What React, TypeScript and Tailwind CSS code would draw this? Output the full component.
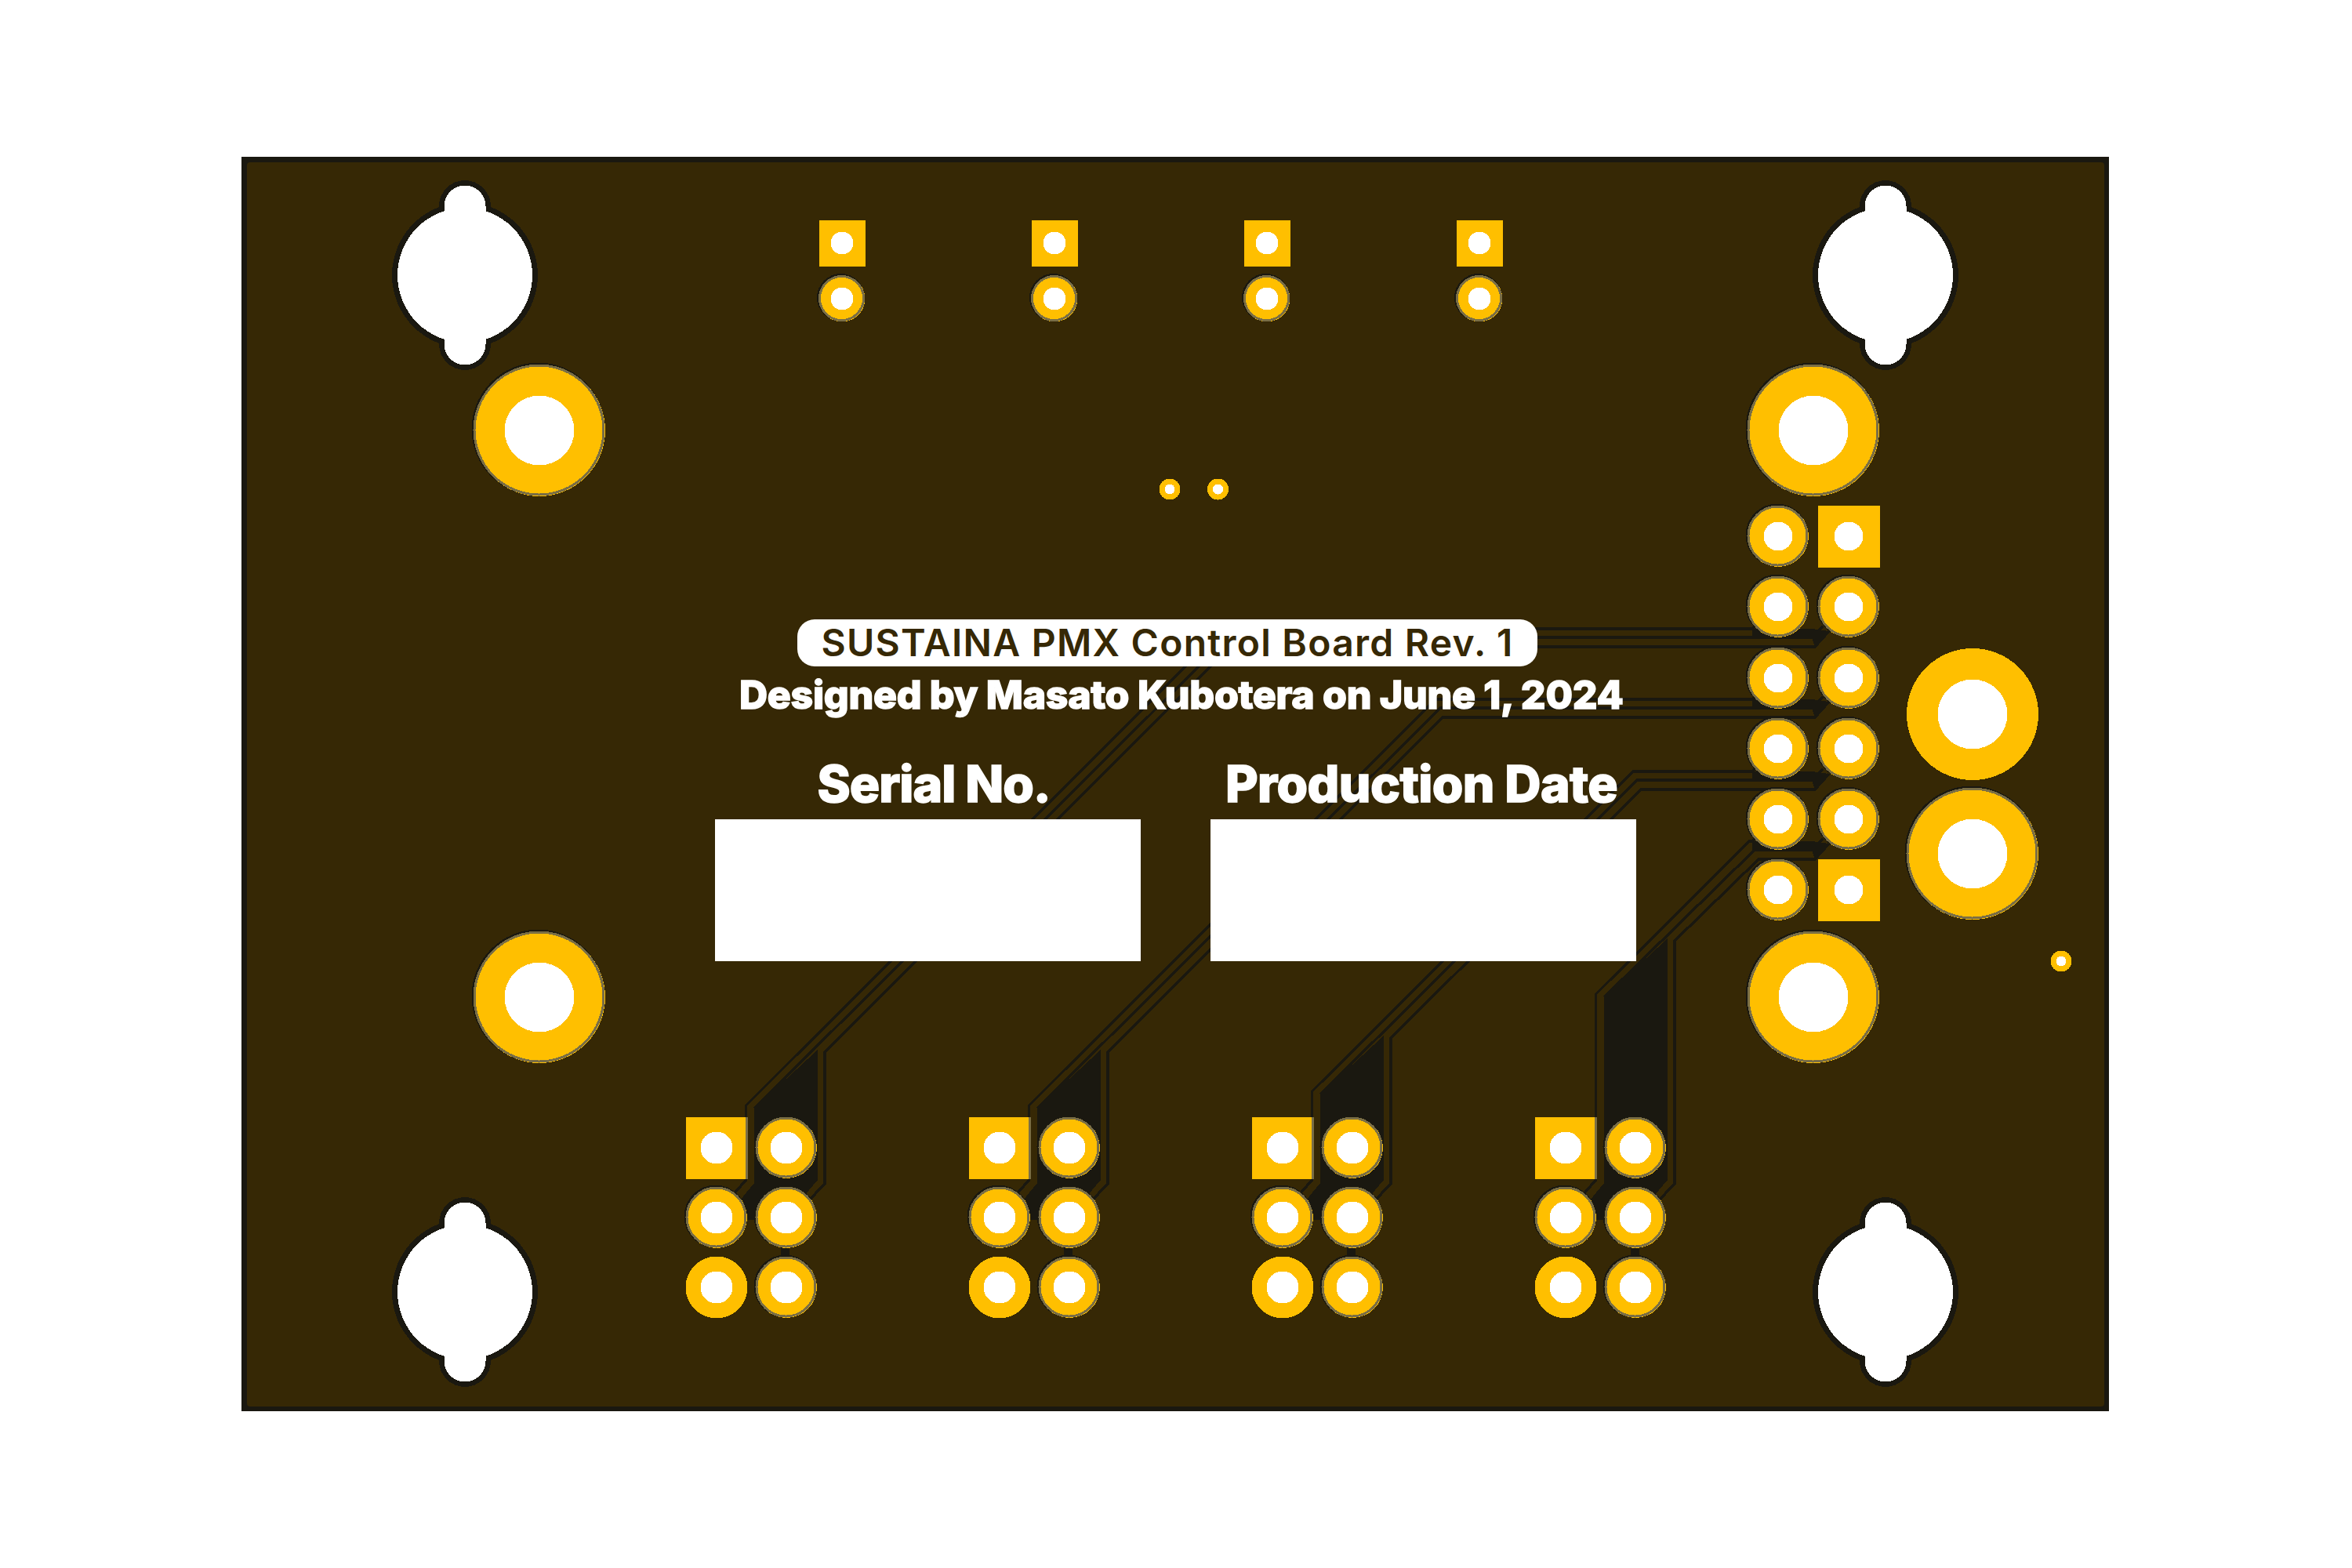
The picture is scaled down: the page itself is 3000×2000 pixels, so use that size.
const YELLOW = "#ffbf00";
const RING = "#7a6e45";
const DARK = "#1a1810";

type Line = number[][];

function toPoints(pts: Line) {
  return pts.map((p) => p.join(",")).join(" ");
}

function Trace({ pts }: { pts: Line }) {
  return <polyline points={toPoints(pts)} fill="none" stroke={DARK} strokeWidth={3.5} />;
}

function RoundPad({ x, y, r, hole, ring = true }: { x: number; y: number; r: number; hole: number; ring?: boolean }) {
  return (
    <g>
      {ring && <circle cx={x - 1.5} cy={y - 1.5} r={r + 1} fill={DARK} />}
      <circle cx={x} cy={y} r={r} fill={YELLOW} />
      {ring && <circle cx={x - 0.5} cy={y - 0.5} r={r - 1.5} fill="none" stroke={RING} strokeWidth={3} />}
      <circle cx={x} cy={y} r={hole} fill="#ffffff" />
    </g>
  );
}

function SquarePad({ x, y, size, hole, edge = false }: { x: number; y: number; size: number; hole: number; edge?: boolean }) {
  return (
    <g>
      <rect x={x - size / 2} y={y - size / 2} width={size} height={size} fill={YELLOW} />
      {edge && <rect x={x + size / 2 - 3} y={y - size / 2} width={3} height={size} fill={RING} />}
      <circle cx={x} cy={y} r={hole} fill="#ffffff" />
    </g>
  );
}

function MountHole({ x, y }: { x: number; y: number }) {
  return (
    <g>
      <circle cx={x} cy={y} r={93} fill={DARK} />
      <circle cx={x} cy={y - 88} r={33} fill={DARK} />
      <circle cx={x} cy={y + 88} r={33} fill={DARK} />
      <rect x={x - 26.5} y={y - 88} width={53} height={176} fill="#ffffff" />
      <circle cx={x} cy={y} r={86} fill="#ffffff" />
      <circle cx={x} cy={y - 88} r={26.5} fill="#ffffff" />
      <circle cx={x} cy={y + 88} r={26.5} fill="#ffffff" />
    </g>
  );
}

// one bus per bottom header: from the right header, down the 45deg run, into the pins
const buses = [
  { dx: 0, rise: 0, row: 0, sums: [2362, 2379, 2394] },
  { dx: 361, rise: 0, row: 90, sums: [2723, 2740, 2755] },
  { dx: 722, rise: 18, row: 182, sums: [3067, 3083, 3100] },
  { dx: 1084, rise: 142, row: 271, sums: [3304, 3322, 3339] },
];

function Bus({ dx, rise, row, sums }: { dx: number; rise: number; row: number; sums: number[] }) {
  const y1 = 802 + row;
  const y2 = 813 + row;
  const y3 = 825 + row;
  const x1 = 951.5 + dx;
  const xl = 962 + dx;
  const xr = 1043 + dx;
  const xd = 1052 + dx;
  const bend1 = 1410 - rise;
  const bendL = 1414 - rise;
  const bendR = 1339 - rise;
  const bendD = 1342 - rise;
  return (
    <g>
      <polygon
        points={toPoints([
          [xl, bendL],
          [xr, bendR],
          [xr, 1505],
          [xr - 22, 1531],
          [xr - 40, 1556],
          [xl - 10, 1556],
          [xl - 19, 1532],
          [xl, 1509],
        ])}
        fill={DARK}
      />
      <rect x={996 + dx} y={1588} width={11} height={18} fill={DARK} />
      <Trace
        pts={[
          [2245, y1 - 10],
          [2235, y1],
          [sums[0] - y1, y1],
          [x1, bend1],
          [x1, 1505],
          [x1 - 20, 1528],
        ]}
      />
      <Trace
        pts={[
          [2325, y2 - 14],
          [2311, y2],
          [sums[1] - y2, y2],
          [xl, bendL],
        ]}
      />
      <Trace
        pts={[
          [2333, y3 - 20],
          [2315, y3],
          [sums[2] - y3, y3],
          [xd, bendD],
          [xd, 1510],
          [xd - 24, 1535],
        ]}
      />
      <polygon
        points={toPoints([
          [2235, y1],
          [2311, y1],
          [2333, y1 + 3],
          [2315, y3],
          [2311, y2],
          [2235, y2],
        ])}
        fill={DARK}
      />
    </g>
  );
}

const headerRows = [774, 865, 955, 1045, 1135];
const bottomGroups = [0, 361, 722, 1083];
const topPads = [1074, 1345, 1616, 1887];

function BoardArt() {
  return (
    <svg
      className="absolute inset-0"
      width={2382}
      height={1600}
      viewBox="308 200 2382 1600"
      shapeRendering="crispEdges"
    >
      {buses.map((b) => (
        <Bus key={b.dx} {...b} />
      ))}

      <MountHole x={593} y={351} />
      <MountHole x={2405} y={351} />
      <MountHole x={593} y={1648} />
      <MountHole x={2405} y={1648} />

      <RoundPad x={688} y={549} r={84} hole={44.5} />
      <RoundPad x={2313} y={549} r={84} hole={44.5} />
      <RoundPad x={688} y={1272} r={84} hole={44.5} />
      <RoundPad x={2313} y={1272} r={84} hole={44.5} />
      <RoundPad x={2516} y={911} r={84} hole={44.5} ring={false} />
      <RoundPad x={2516} y={1089} r={84} hole={44.5} />

      {topPads.map((x) => (
        <g key={x}>
          <SquarePad x={x} y={310} size={59} hole={14.5} />
          <RoundPad x={x} y={381} r={29.5} hole={14.5} />
        </g>
      ))}

      <RoundPad x={1492} y={624} r={13.5} hole={6.5} ring={false} />
      <RoundPad x={1553.5} y={624} r={13.5} hole={6.5} ring={false} />
      <RoundPad x={2629} y={1226} r={13.5} hole={6.5} ring={false} />

      <RoundPad x={2268} y={684} r={39} hole={18.5} />
      <SquarePad x={2358} y={684} size={79} hole={18.5} />
      {headerRows.map((y, i) => (
        <g key={y}>
          <RoundPad x={2268} y={y} r={39} hole={18.5} />
          {i < 4 ? (
            <RoundPad x={2358} y={y} r={39} hole={18.5} />
          ) : (
            <SquarePad x={2358} y={y} size={79} hole={18.5} />
          )}
        </g>
      ))}

      {bottomGroups.map((dx) => (
        <g key={dx}>
          <SquarePad x={914 + dx} y={1464} size={79} hole={20.5} edge />
          <RoundPad x={1003 + dx} y={1464} r={39} hole={20.5} />
          <RoundPad x={914 + dx} y={1553} r={39} hole={20.5} />
          <RoundPad x={1003 + dx} y={1553} r={39} hole={20.5} />
          <RoundPad x={914 + dx} y={1642} r={39.5} hole={20.5} ring={false} />
          <RoundPad x={1003 + dx} y={1642} r={39} hole={20.5} />
        </g>
      ))}
    </svg>
  );
}

function SilkLabels() {
  return (
    <div className="absolute left-[604px] top-[590px] flex w-[1175px] flex-col font-['Inter',sans-serif]">
      <div className="ml-[105px] flex h-[60px] w-[944px] items-center justify-center rounded-[22px] bg-white">
        <span className="text-[48px] leading-none font-semibold tracking-[1.25px] whitespace-nowrap text-[#362805]">
          SUSTAINA PMX Control Board Rev. 1
        </span>
      </div>
      <div className="mt-[6px] ml-[31px] h-[60px] text-[50px] leading-[60px] font-extrabold tracking-[-0.3px] whitespace-nowrap text-white [-webkit-text-stroke:1.5px_white]">
        Designed by Masato Kubotera on June 1, 2024
      </div>
      <div className="mt-[46px] grid grid-cols-[543px_543px] gap-x-[89px]">
        <div className="flex flex-col">
          <div className="h-[83px] pl-[15px] text-center text-[64px] leading-[76px] font-extrabold tracking-[-1px] whitespace-nowrap text-white [-webkit-text-stroke:1.5px_white]">
            Serial No.
          </div>
          <div className="h-[181px] bg-white" />
        </div>
        <div className="flex flex-col">
          <div className="h-[83px] pr-[5px] text-center text-[64px] leading-[76px] font-extrabold tracking-[-0.6px] whitespace-nowrap text-white [-webkit-text-stroke:1.5px_white]">
            Production Date
          </div>
          <div className="h-[181px] bg-white" />
        </div>
      </div>
    </div>
  );
}

export default function App() {
  return (
    <div className="h-[2000px] w-[3000px] bg-white pt-[200px] pl-[308px]">
      <div className="relative h-[1600px] w-[2382px] bg-[#1a1810] p-[6.5px]">
        <div className="h-full w-full rounded-[4px] bg-[#362805]" />
        <BoardArt />
        <SilkLabels />
      </div>
    </div>
  );
}
